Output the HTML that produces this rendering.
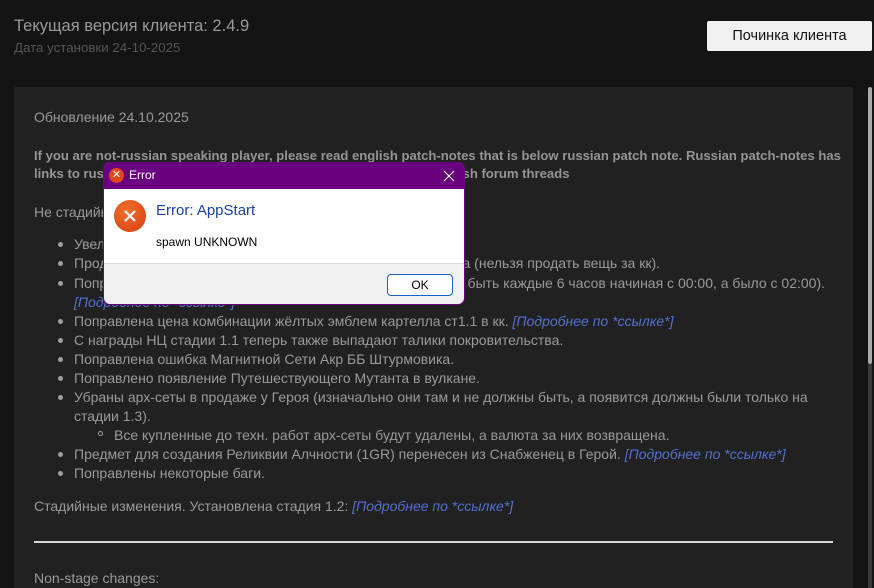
<!DOCTYPE html>
<html><head><meta charset="utf-8"><style>
*{margin:0;padding:0;box-sizing:border-box}
body{width:874px;height:588px;overflow:hidden;background:#141414;font-family:"Liberation Sans",Arial,sans-serif;position:relative}
.a{position:absolute;white-space:nowrap}
.t{color:#9a9a9a;font-size:14px}
.l{color:#5470d0;font-style:italic}
.b{position:absolute;width:5px;height:5px;border-radius:50%;background:#a0a0a0}
</style></head><body>
<div class="a" style="left:14px;top:17px;font-size:16.5px;color:#9a9a9a">Текущая версия клиента: 2.4.9</div>
<div class="a" style="left:14px;top:40px;font-size:13.3px;color:#555">Дата установки 24-10-2025</div>
<div class="a" style="left:707px;top:21px;width:165px;height:30px;background:#f0f0f0;border-radius:2px;color:#111;font-size:14.5px;text-align:center;line-height:31px">Починка клиента</div>
<div class="a" style="left:14px;top:87px;width:839px;height:501px;background:#212121"></div>
<div class="a" style="left:868px;top:87px;width:4px;height:277px;background:#a8a8a8;border-radius:2px"></div>
<div class="a" style="left:868px;top:364px;width:4px;height:224px;background:#3a3a3a"></div>

<div class="a t" style="left:34px;top:109px">Обновление 24.10.2025</div>
<div class="a t" style="left:34px;top:148px;font-size:13.1px;font-weight:bold;color:#959595">If you are not-russian speaking player, please read english patch-notes that is below russian patch note. Russian patch-notes has</div>
<div class="a t" style="left:34px;top:166px;font-size:13.1px;font-weight:bold;color:#959595">links to russian forum threads, english patch-notes has links to english forum threads</div>
<div class="a t" style="left:34px;top:204px">Не стадийные изменения:</div>

<div class="b" style="left:58px;top:242px"></div><div class="a t" style="left:74px;top:236px">Увеличен лимит продажи вещей на аукционе</div>
<div class="b" style="left:58px;top:261px"></div><div class="a t" style="left:74px;top:255px">Продажа вещей</div><div class="a t" style="right:214px;top:255px">а (нельзя продать вещь за кк).</div>
<div class="b" style="left:58px;top:281px"></div><div class="a t" style="left:74px;top:275px">Поправлено время</div><div class="a t" style="right:49px;top:275px">о быть каждые 6 часов начиная с 00:00, а было с 02:00).</div>
<div class="a t l" style="left:74px;top:294px">[Подробнее по *ссылке*]</div>
<div class="b" style="left:58px;top:319px"></div><div class="a t" style="left:74px;top:313px">Поправлена цена комбинации жёлтых эмблем картелла ст1.1 в кк. <span class="l">[Подробнее по *ссылке*]</span></div>
<div class="b" style="left:58px;top:338px"></div><div class="a t" style="left:74px;top:332px">С награды НЦ стадии 1.1 теперь также выпадают талики покровительства.</div>
<div class="b" style="left:58px;top:357px"></div><div class="a t" style="left:74px;top:351px">Поправлена ошибка Магнитной Сети Акр ББ Штурмовика.</div>
<div class="b" style="left:58px;top:376px"></div><div class="a t" style="left:74px;top:370px">Поправлено появление Путешествующего Мутанта в вулкане.</div>
<div class="b" style="left:58px;top:395px"></div><div class="a t" style="left:74px;top:389px">Убраны арх-сеты в продаже у Героя (изначально они там и не должны быть, а появится должны были только на</div>
<div class="a t" style="left:74px;top:408px">стадии 1.3).</div>
<div class="a" style="left:98px;top:431px;width:5px;height:5px;border:1px solid #a0a0a0;border-radius:50%"></div><div class="a t" style="left:114px;top:427px">Все купленные до техн. работ арх-сеты будут удалены, а валюта за них возвращена.</div>
<div class="b" style="left:58px;top:452px"></div><div class="a t" style="left:74px;top:446px">Предмет для создания Реликвии Алчности (1GR) перенесен из Снабженец в Герой. <span class="l">[Подробнее по *ссылке*]</span></div>
<div class="b" style="left:58px;top:471px"></div><div class="a t" style="left:74px;top:465px">Поправлены некоторые баги.</div>
<div class="a t" style="left:34px;top:498px">Стадийные изменения. Установлена стадия 1.2: <span class="l">[Подробнее по *ссылке*]</span></div>
<div class="a" style="left:34px;top:541px;width:799px;height:2px;background:#d8d8d8"></div>
<div class="a t" style="left:34px;top:570px">Non-stage changes:</div>

<div class="a" style="left:103px;top:162px;width:362px;height:143px;border:1px solid #6a0080;border-radius:7px;overflow:hidden;background:#f0f0f0">
 <div style="position:absolute;left:0;top:0;width:100%;height:26px;background:#6a0080"></div>
 <div style="position:absolute;left:5px;top:5px;width:15px;height:15px;border-radius:50%;background:#e0481a;color:#fff;font-size:11px;text-align:center;line-height:15px">✕</div>
 <div style="position:absolute;left:25px;top:5px;color:#fff;font-size:12px">Error</div>
 <svg style="position:absolute;left:339px;top:7px" width="12" height="12"><path d="M1 1L11 11M11 1L1 11" stroke="#fff" stroke-width="1.2"/></svg>
 <div style="position:absolute;left:0;top:26px;width:100%;height:75px;background:#fff;border-bottom:1px solid #dcdcdc"></div>
 <div style="position:absolute;left:10px;top:37px;width:32px;height:32px;border-radius:50%;background:radial-gradient(circle at 40% 35%,#f0702a,#d43c12)"></div>
 <svg style="position:absolute;left:19px;top:46px" width="14" height="14"><path d="M2 2L12 12M12 2L2 12" stroke="#fff" stroke-width="2.2"/></svg>
 <div style="position:absolute;left:52px;top:39px;color:#1a3fa8;font-size:15px">Error: AppStart</div>
 <div style="position:absolute;left:52px;top:72px;color:#000;font-size:12px">spawn UNKNOWN</div>
 <div style="position:absolute;left:283px;top:111px;width:66px;height:22px;background:#fdfdfd;border:1px solid #1a64c8;border-radius:4px;text-align:center;line-height:20px;font-size:12px;color:#000">OK</div>
</div>
</body></html>
